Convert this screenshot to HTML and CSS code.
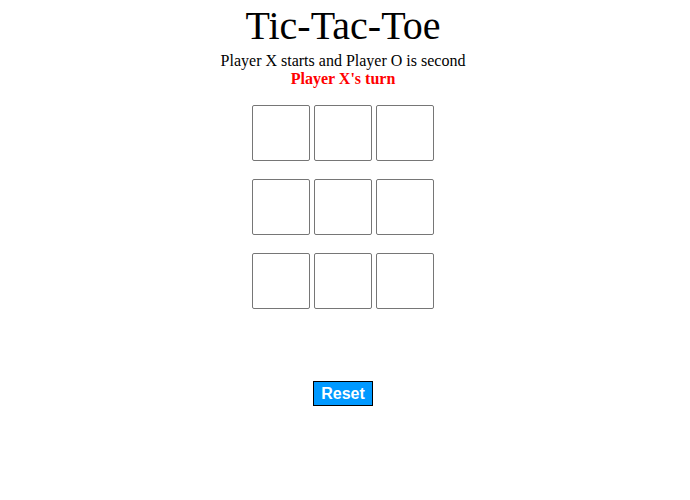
FILE: index.html
```html
<!DOCTYPE html>
<html>
<head>
<meta charset="utf-8">
<title>Tic-Tac-Toe</title>
<link rel="stylesheet" href="styles.css">
</head>
<body>
<main class="game">
  <h1 class="title">Tic-Tac-Toe</h1>
  <p class="intro">Player X starts and Player O is second</p>
  <p class="status">Player X's turn</p>
  <div class="board">
    <div class="row">
      <button class="cell"></button>
      <button class="cell"></button>
      <button class="cell"></button>
    </div>
    <div class="row">
      <button class="cell"></button>
      <button class="cell"></button>
      <button class="cell"></button>
    </div>
    <div class="row">
      <button class="cell"></button>
      <button class="cell"></button>
      <button class="cell"></button>
    </div>
  </div>
  <button class="reset">Reset</button>
</main>
</body>
</html>
```
FILE: styles.css
```css
html, body {
  margin: 0;
  padding: 0;
  background: #ffffff;
}

.game {
  width: 686px;
  display: flex;
  flex-direction: column;
  align-items: center;
  font-family: "Liberation Serif", "Times New Roman", serif;
  color: #000;
  padding-top: 3px;
}

.title {
  margin: 0;
  font-size: 40px;
  font-weight: normal;
  line-height: 46px;
}

.intro {
  margin: 3px 0 0 0;
  font-size: 16px;
  line-height: 18px;
}

.status {
  margin: 0;
  font-size: 16px;
  line-height: 18px;
  font-weight: bold;
  color: #ff0000;
}

.board {
  margin-top: 17px;
  display: flex;
  flex-direction: column;
  gap: 18px;
}

.row {
  display: flex;
  gap: 4px;
}

.cell {
  width: 58px;
  height: 56px;
  margin: 0;
  padding: 0;
  background: #ffffff;
  border: 1px solid #767676;
  border-radius: 2px;
}

.reset {
  margin-top: 72px;
  padding: 2px 7px;
  font-family: "Liberation Sans", Arial, sans-serif;
  font-size: 16px;
  font-weight: bold;
  line-height: 19px;
  color: #ffffff;
  background: #0099ff;
  border: 1px solid #000000;
  border-radius: 0;
}
```
